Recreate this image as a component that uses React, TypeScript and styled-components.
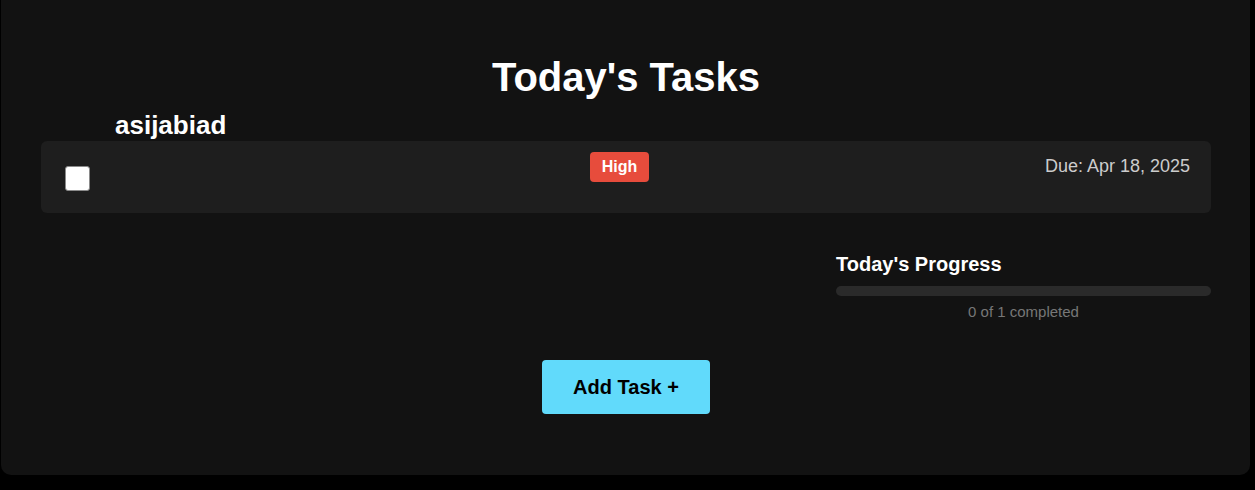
import React from "react";
import styled, { createGlobalStyle } from "styled-components";

const GlobalStyle = createGlobalStyle`
  html, body {
    margin: 0;
    padding: 0;
    background: #000;
    font-family: "Liberation Sans", Arial, sans-serif;
  }
  * { box-sizing: border-box; }
`;

const Page = styled.div`
  padding: 0 5px 16px 1px;
  background: #000;
`;

const Card = styled.main`
  background: #121212;
  border-radius: 0 0 10px 10px;
  padding: 55px 39px 61px 40px;
  display: flex;
  flex-direction: column;
`;

const Title = styled.h1`
  margin: 0 0 10px;
  font-size: 40px;
  font-weight: 700;
  color: #fff;
  text-align: center;
  line-height: normal;
`;

const TaskName = styled.h3`
  margin: 0;
  padding-left: 74px;
  font-size: 26px;
  font-weight: 700;
  color: #fff;
  line-height: normal;
`;

const TaskRow = styled.div`
  display: grid;
  grid-template-columns: 25px 1fr auto;
  column-gap: 24px;
  align-items: start;
  background: #1e1e1e;
  border-radius: 6px;
  padding: 11px 21px 11px 24px;
`;

const Check = styled.input.attrs({ type: "checkbox" })`
  appearance: none;
  margin: 14px 0 11px;
  width: 25px;
  height: 25px;
  background: #fff;
  border: 1px solid #8a8a8a;
  border-radius: 3px;
`;

const BadgeCell = styled.div`
  display: flex;
  justify-content: center;
  padding-left: 104px;
`;

const Badge = styled.span<{ $color: string }>`
  display: inline-flex;
  align-items: center;
  height: 30px;
  padding: 0 12px;
  border-radius: 4px;
  background: ${(p) => p.$color};
  color: #fff;
  font-size: 16px;
  font-weight: 700;
`;

const Due = styled.span`
  margin-top: 4px;
  font-size: 18px;
  color: #cccccc;
  line-height: normal;
`;

const Progress = styled.section`
  align-self: flex-end;
  width: 375px;
  margin-top: 40px;
  display: flex;
  flex-direction: column;
`;

const ProgressTitle = styled.h4`
  margin: 0 0 10px;
  font-size: 20px;
  font-weight: 700;
  color: #fff;
  line-height: normal;
`;

const Track = styled.div`
  height: 10px;
  border-radius: 5px;
  background: #2a2a2a;
  overflow: hidden;
`;

const Fill = styled.div`
  height: 100%;
  background: #61dafb;
`;

const ProgressText = styled.p`
  margin: 7px 0 0;
  font-size: 15px;
  color: #777;
  text-align: center;
  line-height: normal;
`;

const AddButton = styled.button`
  align-self: center;
  margin-top: 40px;
  height: 54px;
  padding: 0 31px;
  border: none;
  border-radius: 4px;
  background: #61dafb;
  color: #000;
  font-family: "Liberation Sans", Arial, sans-serif;
  font-size: 20px;
  font-weight: 700;
  cursor: pointer;
`;

export default function App() {
  const done = 0;
  const total = 1;
  return (
    <Page>
      <GlobalStyle />
      <Card>
        <Title>Today's Tasks</Title>
        <TaskName>asijabiad</TaskName>
        <TaskRow>
          <Check />
          <BadgeCell>
            <Badge $color="#e74c3c">High</Badge>
          </BadgeCell>
          <Due>Due: Apr 18, 2025</Due>
        </TaskRow>
        <Progress>
          <ProgressTitle>Today's Progress</ProgressTitle>
          <Track>
            <Fill style={{ width: `${(done / total) * 100}%` }} />
          </Track>
          <ProgressText>
            {done} of {total} completed
          </ProgressText>
        </Progress>
        <AddButton>Add Task +</AddButton>
      </Card>
    </Page>
  );
}
